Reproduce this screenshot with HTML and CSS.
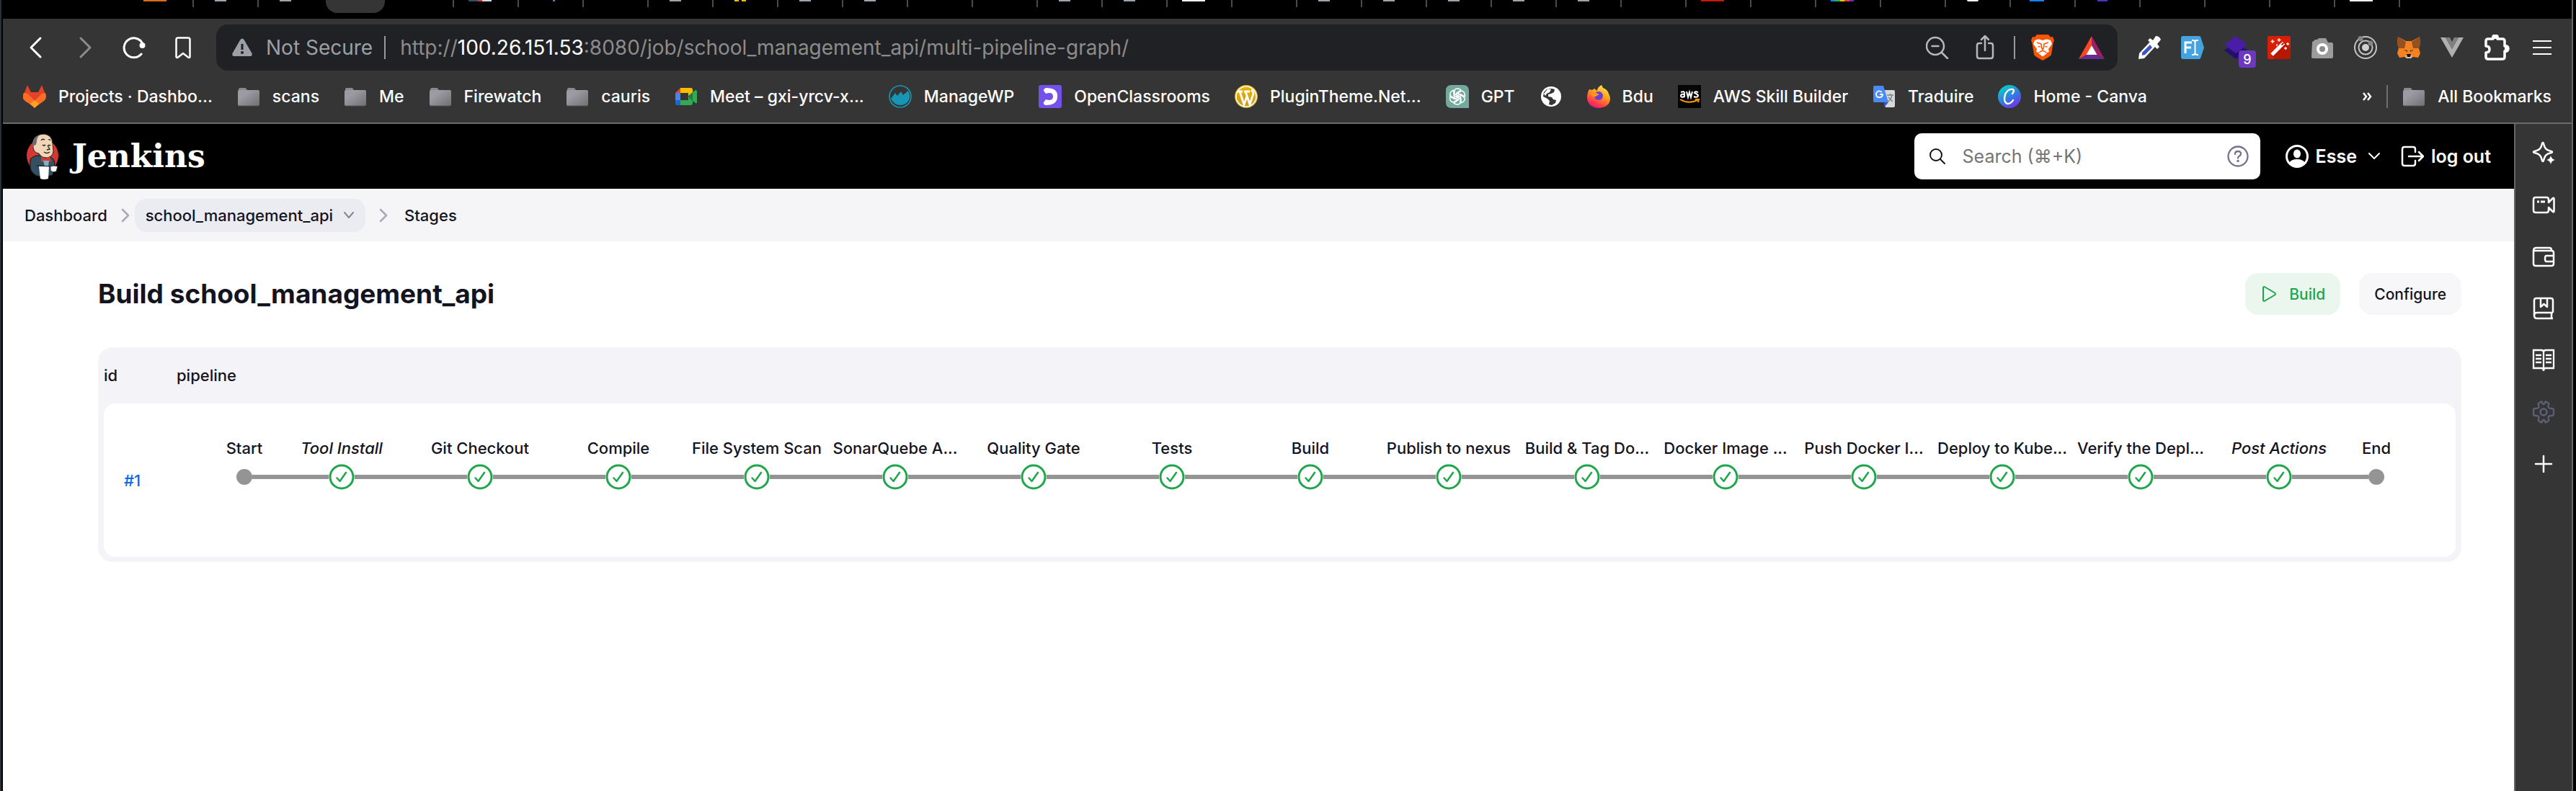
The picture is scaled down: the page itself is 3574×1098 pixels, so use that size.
FILE: index.html
```html
<!DOCTYPE html>
<html lang="en">
<head>
<meta charset="utf-8">
<title>Build school_management_api - Jenkins</title>
<link rel="stylesheet" href="styles.css">
</head>
<body>
<svg width="0" height="0" class="defs" aria-hidden="true">
  <defs>
    <linearGradient id="gFolder" x1="0" y1="0" x2="1" y2="1"><stop offset="0.3" stop-color="#9b9ba3"/><stop offset="1" stop-color="#707072"/></linearGradient>
    <linearGradient id="gCanva" x1="0.2" y1="0" x2="0.8" y2="1"><stop offset="0.1" stop-color="#0cc4cc"/><stop offset="0.55" stop-color="#3478e2"/><stop offset="1" stop-color="#7d2ae8"/></linearGradient>
    <linearGradient id="gFire" x1="0.8" y1="0" x2="0.3" y2="1"><stop offset="0" stop-color="#fff04a"/><stop offset="0.45" stop-color="#ff9a1f"/><stop offset="0.8" stop-color="#ff3a4c"/><stop offset="1" stop-color="#e31587"/></linearGradient>
    <linearGradient id="gGold" x1="0" y1="0" x2="0" y2="1"><stop offset="0" stop-color="#f0b400"/><stop offset="1" stop-color="#c79a1c"/></linearGradient>
    <symbol id="folder" viewBox="0 0 32 32"><path d="M2 9V6q0-2 2-2h7q2 0 2 2l1 1v3z" fill="#8a8a8e"/><rect x="1" y="7" width="30" height="22" rx="2" fill="url(#gFolder)"/><path d="M2 29h28" stroke="#555" stroke-width="1"/></symbol>
    <symbol id="check" viewBox="0 0 36 36"><circle cx="18" cy="18" r="16" fill="#fff" stroke="#1ea64b" stroke-width="3"/><path d="M11.500 19.500l4 4.500 8.500-12" fill="none" stroke="#1ea64b" stroke-width="2.500" stroke-linecap="round" stroke-linejoin="round"/></symbol>
    <symbol id="dot" viewBox="0 0 22 22"><circle cx="11" cy="11" r="11" fill="#949494"/></symbol>
    <symbol id="crumb" viewBox="0 0 14 20"><path d="M3 2l8 8-8 8" fill="none" stroke="#a9a9b9" stroke-width="2.500" stroke-linecap="round" stroke-linejoin="round"/></symbol>
  </defs>
</svg>

<div class="window">
  <div class="tabs" aria-hidden="true">
    <span class="tab"><i class="fav orange"></i></span>
    <span class="tab"><i class="fav grey"></i></span>
    <span class="tab plain"><i class="fav grey"></i></span>
    <span class="tab active"></span>
    <span class="tab"></span>
    <span class="tab"><i class="fav butler"></i></span>
    <span class="tab"><i class="fav blue-dot"></i></span>
    <span class="tab"></span>
    <span class="tab"><i class="fav grey"></i></span>
    <span class="tab"><i class="fav yellow"></i></span>
    <span class="tab"><i class="fav grey"></i></span>
    <span class="tab"><i class="fav grey"></i></span>
    <span class="tab"></span>
    <span class="tab"></span>
    <span class="tab"><i class="fav grey"></i></span>
    <span class="tab"><i class="fav grey"></i></span>
    <span class="tab"><i class="fav white"></i></span>
    <span class="tab"></span>
    <span class="tab"><i class="fav grey"></i></span>
    <span class="tab"><i class="fav grey"></i></span>
    <span class="tab"><i class="fav grey"></i></span>
    <span class="tab"><i class="fav grey"></i></span>
    <span class="tab"><i class="fav grey"></i></span>
    <span class="tab"></span>
    <span class="tab"><i class="fav red"></i></span>
    <span class="tab"></span>
    <span class="tab"><i class="fav stripes"></i></span>
    <span class="tab"></span>
    <span class="tab"><i class="fav round"></i></span>
    <span class="tab"><i class="fav azure"></i></span>
    <span class="tab"><i class="fav indigo"></i></span>
    <span class="tab"></span>
    <span class="tab"></span>
    <span class="tab"></span>
    <span class="tab"><i class="fav white"></i></span>
  </div>

  <div class="toolbar">
    <div class="nav">
      <button type="button" aria-label="Back"><svg width="32" height="32" viewBox="0 0 32 32"><path d="M22 3L9 16l13 13" fill="none" stroke="#fff" stroke-width="3" stroke-linecap="round" stroke-linejoin="round"/></svg></button>
      <button type="button" aria-label="Forward"><svg width="32" height="32" viewBox="0 0 32 32"><path d="M10 3l13 13-13 13" fill="none" stroke="#8c8c8c" stroke-width="3" stroke-linecap="round" stroke-linejoin="round"/></svg></button>
      <button type="button" aria-label="Reload"><svg width="32" height="32" viewBox="0 0 32 32"><path d="M26 25A13.500 13.500 0 1 1 28 11" fill="none" stroke="#fff" stroke-width="3" stroke-linecap="round"/><circle cx="27.500" cy="13" r="4" fill="#fff"/></svg></button>
      <button type="button" aria-label="Bookmark this page"><svg width="32" height="32" viewBox="0 0 32 32"><path d="M6.500 5q0-2.500 2.500-2.500h14q2.500 0 2.500 2.500v24q-1 1.500-2.500.500l-7-5.500-7 5.500q-1.500 1-2.500-.500z" fill="none" stroke="#fff" stroke-width="2.500" stroke-linejoin="round"/></svg></button>
    </div>
    <div class="address">
      <svg width="28" height="26" viewBox="0 0 28 26"><path d="M11.500 2q2.500-3 5 0l11 19q1 4-3 4h-21q-4 0-3-4z" fill="#9aa0a6"/><path d="M14 8v8" stroke="#202124" stroke-width="3"/><circle cx="14" cy="20" r="2" fill="#202124"/></svg>
      <span class="insecure">Not Secure</span>
      <span class="rule light"></span>
      <span class="url">http://<b>100.26.151.53</b>:8080/job/school_management_api/multi-pipeline-graph/</span>
      <div class="address-actions">
        <svg width="32" height="32" viewBox="0 0 32 32"><g fill="none" stroke="#b8b8b8" stroke-width="2.500" stroke-linecap="round"><circle cx="13" cy="14" r="12"/><path d="M22 23l8 8M8.500 14h9"/></g></svg>
        <svg width="32" height="36" viewBox="0 0 32 36"><g fill="none" stroke="#b8b8b8" stroke-width="2.500" stroke-linecap="round" stroke-linejoin="round"><path d="M11 12H8q-3 0-3 3v15q0 3 3 3h16q3 0 3-3V15q0-3-3-3h-3M16 22V3M11 7l5-5 5 5"/></g></svg>
        <span class="rule light"></span>
        <svg width="32" height="36" viewBox="0 0 32 36"><path d="M8 0h16l3 3.500 3-.500 2 5-1.500 4L28 28q-1 2-12 8Q5 30 4 28L1.500 12 0 8l2-5 3 .500z" fill="#fb5402"/><path d="M5 8q5-3 11 0 6-3 11 0l2 5-5 7 1 4-3 1-4-3h-4l-4 3-3-1 1-4-5-7z" fill="#fff"/><path d="M8 11l6 2 .500 5L16 21l1.500-3 .500-5 6-2M9.500 17l3-.500M19.500 16.500l3 .500" fill="none" stroke="#fb5402" stroke-width="1.600"/><path d="M16 23l6 3-6 4.500L10 26z" fill="#fff"/></svg>
        <svg width="36" height="32" viewBox="0 0 36 32"><path d="M18 0L0 32l11-6 7-13z" fill="#ff4724"/><path d="M18 0l18 32-11-6-7-13z" fill="#9e1f63"/><path d="M0 32h36l-11-6H11z" fill="#662d91"/><path d="M18 13l7.500 13h-15z" fill="#fff"/></svg>
      </div>
    </div>
    <div class="extensions">
      <svg width="32" height="32" viewBox="0 0 32 32"><path d="M2 24L17 8l7 7L9 31l-8 1z" fill="#fff"/><path d="M6 27v-4L17 12l3 4-10 10z" fill="#3a55c8"/><path d="M14 6l3-3 4 3 4-6q5 0 7 5l-5 6 3 4-3 3z" fill="#fff"/></svg>
      <svg width="32" height="32" viewBox="0 0 32 32"><path d="M3 0h22q1.500 0 2 1l5 15-5 15q-.500 1-2 1H3q-3 0-3-3V3q0-3 3-3z" fill="#45a3e0"/><path d="M6 24V9h9M6 16h8" fill="none" stroke="#fff" stroke-width="3"/><path d="M15 6h2q2.500 0 2.500 3v14q0 3-2.500 3h-2M24 6h-2q-2.500 0-2.500 3v14q0 3 2.500 3h2" fill="none" stroke="#fff" stroke-width="2"/></svg>
      <span class="badged"><svg width="32" height="32" viewBox="0 0 32 32"><path d="M16 8l16 12-16 12L0 20z" fill="#22106f"/><path d="M16 0l16 12-16 12L0 12z" fill="#4a1da8"/></svg><span class="badge">9</span></span>
      <svg width="32" height="32" viewBox="0 0 32 32"><rect width="32" height="32" rx="2" fill="#d91e06"/><path d="M5 26L23 8l9 10v12q0 2-2 2H10z" fill="#b91600"/><path d="M6 26L20 12" stroke="#fff" stroke-width="5"/><path d="M19.500 12.500l3-3" stroke="#fff" stroke-width="5"/><path d="M19.500 12.500l3-3" stroke="#d91e06" stroke-width="2"/><path d="M7 5v5M4.500 7.500h5M16 3v5M13.500 5.500h5M13 11v3M25 15v4M23 17h4M28 9v4M26 11h4" stroke="#fff" stroke-width="1.300"/></svg>
      <svg width="32" height="32" viewBox="0 0 32 32"><path d="M2 9q0-2 2-2l2-2h3l2-2h10q2 4 3 6h5q2 0 2 2v18q0 2-2 2H3q-2 0-2-2z" fill="#9c9c9c"/><circle cx="16" cy="18" r="8" fill="#fff"/><circle cx="16" cy="18" r="4" fill="#8a8a8a"/></svg>
      <svg width="32" height="32" viewBox="0 0 32 32"><g fill="none" stroke="#c4c4c4" stroke-width="2"><circle cx="16" cy="16" r="15"/><circle cx="16" cy="16" r="9.500"/></g><circle cx="16" cy="16" r="5" fill="#d0d0d0"/><circle cx="9" cy="3.500" r="3.500" fill="#858585"/><circle cx="23" cy="10" r="3.500" fill="#858585"/></svg>
      <svg width="32" height="32" viewBox="0 0 32 32"><path d="M1 1l11 6h8l11-6 1 9-2 7 2 7-3 6-7-1-3 2h-6l-3-2-7 1-3-6 2-7-2-7z" fill="#f58220"/><path d="M1 1l11 7-2 9H2L0 10zM31 1L20 8l2 9h8l2-7z" fill="#96501f"/><path d="M9 19l5 1v2zM23 19l-5 1v2z" fill="#333"/><path d="M11 27h10l-2 4h-6z" fill="#d6c0b3"/><path d="M13 25h6l-1 4h-4z" fill="#111"/></svg>
      <svg width="32" height="32" viewBox="0 0 32 32"><path d="M0 2h7l9 16 9-16h7L16 30z" fill="#b0b0b0"/><path d="M7 2h6l3 6 3-6h6l-9 16z" fill="#808080"/></svg>
      <svg width="36" height="36" viewBox="0 0 36 36"><path d="M3 9q0-3 3-3h7q-1-5 3-5t3 5h7q3 0 3 3v7q5-1 5 3.500T29 23v8q0 3-3 3H6q-3 0-3-3v-6q5 0 5-4.500T3 16z" fill="none" stroke="#fff" stroke-width="3.500" stroke-linejoin="round"/><path d="M13 6q-1-5 3-5t3 5zM29 16q5-1 5 3.500T29 23z" fill="#fff"/></svg>
      <svg class="menu" width="28" height="32" viewBox="0 0 28 32"><path d="M1 7h26M1 16h26M1 25h26" stroke="#fff" stroke-width="2"/></svg>
    </div>
  </div>

  <nav class="bookmarks">
    <a href="#"><svg width="32" height="32" viewBox="0 0 32 32"><path d="M6 0l5 10h10l5-10 5 13-15 18L1 13z" fill="#e24329"/><path d="M6 12l10 10L5 24 0 19v-5l1-3z" fill="#fc6d26"/><path d="M1 11l5 1 10 10 10-10 5-1 1 4q0 5-3 7L16 31.500 3 22q-3-2-3-7z" fill="#fc6d26"/><path d="M10 26l6-5 6 5-6 6z" fill="#fca326"/></svg>Projects · Dashbo...</a>
    <a href="#"><svg width="32" height="32"><use href="#folder"/></svg>scans</a>
    <a href="#"><svg width="32" height="32"><use href="#folder"/></svg>Me</a>
    <a href="#"><svg width="32" height="32"><use href="#folder"/></svg>Firewatch</a>
    <a href="#"><svg width="32" height="32"><use href="#folder"/></svg>cauris</a>
    <a href="#"><svg width="32" height="32" viewBox="0 0 32 32"><path d="M8 4v7H1z" fill="#ea4335"/><path d="M8 4h14q3 0 3 3v8l-6 4v-8H8z" fill="#fbbc04"/><path d="M1 11h7v10H1z" fill="#4285f4"/><path d="M1 21h7v7H3q-2 0-2-2z" fill="#1967d2"/><path d="M8 21h11v-2l6-3v9q0 3-3 3H8z" fill="#34a853"/><path d="M18 16l7-6v12z" fill="#188038"/><path d="M25 10l4-3q2 0 2 2v15q0 2-2 1l-4-3z" fill="#34a853"/></svg>Meet – gxi-yrcv-x...</a>
    <a href="#"><svg width="32" height="32" viewBox="0 0 32 32"><circle cx="16" cy="16" r="15" fill="none" stroke="#1795b5" stroke-width="1.600"/><path d="M3 19l6-8 3 4 5-6 3 5 7-6q4 8 1 13-4 7-12 7T3 19z" fill="#1795b5"/></svg>ManageWP</a>
    <a href="#"><svg width="32" height="32" viewBox="0 0 32 32"><rect width="32" height="32" rx="3" fill="#7451eb"/><path d="M10 4q17 0 16 12 0 12-16 12-4-1-3-4l3-4q10 3 10-4t-10-4L7 8q0-3 3-4z" fill="#fff"/></svg>OpenClassrooms</a>
    <a href="#"><svg width="32" height="32" viewBox="0 0 32 32"><circle cx="16" cy="16" r="16" fill="url(#gGold)"/><circle cx="16" cy="16" r="14" fill="none" stroke="#fff" stroke-width="1.500"/><path d="M4 9h7M13 9h8M7 9l6 18 4-11M15 9l6 18 5-15q0-3-3-5" fill="none" stroke="#fff" stroke-width="2.800"/></svg>PluginTheme.Net...</a>
    <a href="#"><svg width="32" height="32" viewBox="0 0 32 32"><path d="M8 0h16q8 0 8 8v24H8q-8 0-8-8V8q0-8 8-8z" fill="#74aa9c"/><g fill="none" stroke="#fff" stroke-width="1.500"><path id="petal" d="M12 19V9q0-4 4-4 3 0 5 2l-6 4v6"/><use href="#petal" transform="rotate(60 16 16)"/><use href="#petal" transform="rotate(120 16 16)"/><use href="#petal" transform="rotate(180 16 16)"/><use href="#petal" transform="rotate(240 16 16)"/><use href="#petal" transform="rotate(300 16 16)"/></g></svg>GPT</a>
    <a href="#" aria-label="Website"><svg width="32" height="32" viewBox="0 0 32 32"><circle cx="16" cy="16" r="14" fill="#fff"/><path d="M17 5l4 1-1 4-4 2-4 1v3l5 1 2 3 4 1-1 4-5 3-4-1 1-5-3-3-6-3 1-6 4-4z" fill="#353535"/><path d="M6 12l5-6h5l-2 4-4 2-2 3z" fill="#fff"/></svg></a>
    <a href="#"><svg width="32" height="32" viewBox="0 0 32 32"><path d="M3 6l4 1 3-2 4 3q0-5 6-8l2 4q6 2 8 8 2 5 2 6 0 13-16 14Q1 31 0 18q0-7 3-12z" fill="url(#gFire)"/><circle cx="16" cy="15" r="6" fill="#6a3ed0"/><path d="M5 12q5-3 12 1l-5 3q-5 1-7-4z" fill="#ff9a1f"/></svg>Bdu</a>
    <a href="#"><svg width="32" height="32" viewBox="0 0 32 32"><rect width="32" height="32" fill="#050505"/><path d="M4 10q5-2 5 1v6M9 13q-5-1-5 2t5 1M12 9l2 8 2-7 2 7 2-8M28 10q-5-2-5 1 5 2 5 4-1 3-6 1" fill="none" stroke="#fff" stroke-width="2"/><path d="M3 20q12 7 24 1M24 20h5l-1 4" fill="none" stroke="#f90" stroke-width="2"/></svg>AWS Skill Builder</a>
    <a href="#"><svg width="32" height="32" viewBox="0 0 32 32"><path d="M12 7h17q2 0 2 2v20q0 2-2 2H18z" fill="#d8d8d8"/><path d="M16 31l6-7h-6z" fill="#3f51b5"/><path d="M3 1h12l7 23H3q-2 0-2-2V3q0-2 2-2z" fill="#4a8af4"/><path d="M13 10q-6-4-8 2 0 6 5 5 4 0 4-4h-4" fill="none" stroke="#fff" stroke-width="1.800"/><path d="M20 14h9M24.500 12v2M27 14q-1 6-6 9M22 17l6 6" stroke="#6f8791" stroke-width="1.500" fill="none"/></svg>Traduire</a>
    <a href="#"><svg width="32" height="32" viewBox="0 0 32 32"><circle cx="16" cy="16" r="16" fill="url(#gCanva)"/><path d="M20 12q4-5 0-6-6-1-10 7-3 11 3 13 5 0 8-5" fill="none" stroke="#fff" stroke-width="2.400" stroke-linecap="round"/></svg>Home - Canva</a>
    <span class="bookmarks-end">
      <button type="button" aria-label="More bookmarks"><svg width="14" height="12" viewBox="0 0 14 12"><path d="M2 1l4 5-4 5M8 1l4 5-4 5" fill="none" stroke="#fff" stroke-width="2.500"/></svg></button>
      <span class="rule"></span>
      <a href="#"><svg width="32" height="32"><use href="#folder"/></svg>All Bookmarks</a>
    </span>
  </nav>

  <div class="view">
    <div class="page">
      <header class="page-header">
        <a class="logo" href="#">
          <svg width="48" height="64" viewBox="0 0 48 64"><ellipse cx="23" cy="31" rx="22" ry="23" fill="#d33833"/><path d="M6 36q6-6 14-5l14 2q6 3 6 8l-3 17-12 3-10-2q-8-4-9-11z" fill="#335061" stroke="#111" stroke-width="1"/><path d="M10 14Q13 1 25 1q11 1 12 13l1 11q-1 8-9 9-8 0-11-6-7-1-8-8z" fill="#f0d6b7" stroke="#222" stroke-width="1"/><path d="M9 18Q8 5 19 2q-4 4-4 9l-1 5q-5 0-4 6z" fill="#6d6b6d"/><path d="M21 10q2-3 5-1M31 9q2-1 3 1M23 16q2 2 4 0M31 16q2 2 3 0M30 17l3 5-4 1M25 26q4 3 8 0" fill="none" stroke="#222" stroke-width="1.300"/><path d="M21 32l6 3 6-3 2 8-6-2-8 2z" fill="#d33833"/><path d="M24 38h8l-1 8h-5z" fill="#81b0c4"/><path d="M18 46h14l-1 17q-6 2-11 0z" fill="#fff"/><path d="M34 46q5-2 10 0l-2 7q-5 2-8-1z" fill="#fff" stroke="#333" stroke-width="1"/><path d="M15 45l18 1" stroke="#111" stroke-width="1"/></svg>
          <span>Jenkins</span>
        </a>
        <div class="header-right">
          <label class="search">
            <svg width="24" height="24" viewBox="0 0 24 24"><g fill="none" stroke="#14141f" stroke-width="2" stroke-linecap="round"><circle cx="10" cy="10" r="8"/><path d="M16 16l6 6"/></g></svg>
            <input type="search" placeholder="Search (⌘+K)" aria-label="Search">
            <svg width="30" height="30" viewBox="0 0 30 30"><g fill="none" stroke="#73738c" stroke-width="2.300" stroke-linecap="round"><circle cx="15" cy="15" r="13.500"/><path d="M11 12q0-4 4-4t4 3.500q0 2-2 3t-2 3"/></g><circle cx="15" cy="21.500" r="1.700" fill="#73738c"/></svg>
          </label>
          <div class="account">
            <a href="#"><svg width="32" height="32" viewBox="0 0 32 32"><circle cx="16" cy="16" r="14.500" fill="none" stroke="#fff" stroke-width="3"/><ellipse cx="16" cy="12.500" rx="5" ry="6" fill="#fff"/><path d="M5 25q3-5 11-5t11 5q-4 6-11 6T5 25z" fill="#fff"/></svg>Esse</a>
            <button type="button" aria-label="User menu"><svg width="18" height="12" viewBox="0 0 18 12"><path d="M2 2l7 7 7-7" fill="none" stroke="#fff" stroke-width="2" stroke-linecap="round" stroke-linejoin="round"/></svg></button>
          </div>
          <a class="logout" href="#"><svg width="32" height="32" viewBox="0 0 32 32"><g fill="none" stroke="#fff" stroke-width="2.500" stroke-linecap="round" stroke-linejoin="round"><path d="M20 10V6q0-3-3-3H5Q2 3 2 6v20q0 3 3 3h12q3 0 3-3v-4M11 16h19M25 10l6 6-6 6"/></g></svg>log out</a>
        </div>
      </header>

      <nav class="breadcrumbs">
        <a href="#">Dashboard</a>
        <svg width="14" height="20"><use href="#crumb"/></svg>
        <a class="pill" href="#">school_management_api<svg width="16" height="12" viewBox="0 0 16 12"><path d="M2 2l6 7 6-7" fill="none" stroke="#85858f" stroke-width="2" stroke-linecap="round" stroke-linejoin="round"/></svg></a>
        <svg width="14" height="20"><use href="#crumb"/></svg>
        <a href="#">Stages</a>
      </nav>

      <main>
        <div class="title-row">
          <h1>Build school_management_api</h1>
          <div class="actions">
            <button type="button" class="btn build"><svg width="24" height="24" viewBox="0 0 24 24"><path d="M4 4q0-3 2.500-1.500L20 10.500q2 1.500 0 3L6.500 21.500Q4 23 4 20z" fill="none" stroke="#1ea64b" stroke-width="2"/></svg>Build</button>
            <button type="button" class="btn">Configure</button>
          </div>
        </div>

        <table class="runs">
          <thead><tr><th class="id">id</th><th>pipeline</th></tr></thead>
          <tbody>
            <tr>
              <td class="id"><a href="#">#1</a></td>
              <td>
                <ol class="graph">
                  <li class="end first"><span class="label">Start</span><span class="node"><svg width="22" height="22"><use href="#dot"/></svg></span></li>
                  <li><span class="label"><em>Tool Install</em></span><span class="node"><svg width="36" height="36"><use href="#check"/></svg></span></li>
                  <li><span class="label">Git Checkout</span><span class="node"><svg width="36" height="36"><use href="#check"/></svg></span></li>
                  <li><span class="label">Compile</span><span class="node"><svg width="36" height="36"><use href="#check"/></svg></span></li>
                  <li><span class="label">File System Scan</span><span class="node"><svg width="36" height="36"><use href="#check"/></svg></span></li>
                  <li><span class="label">SonarQuebe A...</span><span class="node"><svg width="36" height="36"><use href="#check"/></svg></span></li>
                  <li><span class="label">Quality Gate</span><span class="node"><svg width="36" height="36"><use href="#check"/></svg></span></li>
                  <li><span class="label">Tests</span><span class="node"><svg width="36" height="36"><use href="#check"/></svg></span></li>
                  <li><span class="label">Build</span><span class="node"><svg width="36" height="36"><use href="#check"/></svg></span></li>
                  <li><span class="label">Publish to nexus</span><span class="node"><svg width="36" height="36"><use href="#check"/></svg></span></li>
                  <li><span class="label">Build &amp; Tag Do...</span><span class="node"><svg width="36" height="36"><use href="#check"/></svg></span></li>
                  <li><span class="label">Docker Image ...</span><span class="node"><svg width="36" height="36"><use href="#check"/></svg></span></li>
                  <li><span class="label">Push Docker I...</span><span class="node"><svg width="36" height="36"><use href="#check"/></svg></span></li>
                  <li><span class="label">Deploy to Kube...</span><span class="node"><svg width="36" height="36"><use href="#check"/></svg></span></li>
                  <li><span class="label">Verify the Depl...</span><span class="node"><svg width="36" height="36"><use href="#check"/></svg></span></li>
                  <li><span class="label"><em>Post Actions</em></span><span class="node"><svg width="36" height="36"><use href="#check"/></svg></span></li>
                  <li class="end last"><span class="label">End</span><span class="node"><svg width="22" height="22"><use href="#dot"/></svg></span></li>
                </ol>
              </td>
            </tr>
          </tbody>
        </table>
      </main>
    </div>

    <aside class="sidebar">
      <button type="button" aria-label="Assistant"><svg width="32" height="32" viewBox="0 0 32 32"><path d="M15 2q1 0 1.500 3 1.500 7 8.500 8.500 3 .5 3 1.500t-3 1.500q-7 1.500-8.500 8.500-.5 3-1.500 3t-1.500-3q-1.500-7-8.500-8.500-3-.5-3-1.500t3-1.500q7-1.500 8.500-8.500.5-3 1.500-3z" fill="none" stroke="#fff" stroke-width="2.500"/><circle cx="26" cy="26" r="7" fill="#353535"/><path d="M26 20q1 5 6 6-5 1-6 6-1-5-6-6 5-1 6-6z" fill="#fff"/></svg></button>
      <button type="button" aria-label="Talk"><svg width="32" height="32" viewBox="0 0 32 32"><path d="M5 6h15q3 0 3 3v4l6-6q1.500-1 1.500 1v17q0 2-1.500 1l-6-6v4q0 3-3 3H5q-3 0-3-3V9q0-3 3-3z" fill="none" stroke="#fff" stroke-width="2.500" stroke-linejoin="round"/><path d="M7 12h3M12 12h6" stroke="#fff" stroke-width="3"/></svg></button>
      <button type="button" aria-label="Wallet"><svg width="32" height="32" viewBox="0 0 32 32"><path d="M2 8q0-4 4-4h18q3 0 3 3v1M2 8h25q3 0 3 3v15q0 3-3 3H5q-3 0-3-3zM30 15H20q-2 0-2 4t2 4h10" fill="none" stroke="#fff" stroke-width="2.500" stroke-linejoin="round"/></svg></button>
      <button type="button" aria-label="Bookmarks"><svg width="32" height="32" viewBox="0 0 32 32"><path d="M29 22V5q0-3-3-3H6Q3 2 3 5v21q0 4 4 4h22M29 22H7q-4 0-4 4M27 22v8M12 2v12l4.500-4 4.500 4V2" fill="none" stroke="#fff" stroke-width="2.500" stroke-linejoin="round"/></svg></button>
      <button type="button" aria-label="Reading list"><svg width="32" height="32" viewBox="0 0 32 32"><path d="M2 2h11q3 0 3 3 0-3 3-3h11v25H19q-3 0-3 4 0-4-3-4H2zM16 5v24" fill="none" stroke="#fff" stroke-width="2.300"/><path d="M5 9h8M5 14h8M5 19h8M19 9h8M19 14h8M19 19h8" stroke="#fff" stroke-width="2.500"/></svg></button>
      <button type="button" aria-label="Settings"><svg width="32" height="32" viewBox="0 0 32 32"><path d="M12 2q1-1 2 0 0 3 2 3t2-3q1-1 2 0l3 2q1 1 0 2-1 3 0 4t4 1q3 0 3 2v6q0 2-3 2-3 0-4 1t0 4q1 1 0 2l-3 2q-1 1-2 0 0-3-2-3t-2 3q-1 1-2 0l-3-2q-1-1 0-2 1-3 0-4t-4-1q-3 0-3-2v-6q0-2 3-2 3 0 4-1t0-4q-1-1 0-2z" fill="none" stroke="#5c5f76" stroke-width="2.300" stroke-linejoin="round"/><circle cx="16" cy="16" r="4.500" fill="none" stroke="#5c5f76" stroke-width="2.500"/></svg></button>
      <button type="button" aria-label="Add panel"><svg width="32" height="32" viewBox="0 0 32 32"><path d="M16 5v22M5 16h22" stroke="#fff" stroke-width="2.500" stroke-linecap="round"/></svg></button>
    </aside>
  </div>
</div>
</body>
</html>
```
FILE: styles.css
```css
* { box-sizing: border-box; }

body {
  margin: 0;
  padding: 0 4px;
  min-height: 100vh;
  display: flex;
  background: linear-gradient(90deg, #26323a 2px, #000 2px);
  font-family: Inter, "Liberation Sans", sans-serif;
  color: #14141f;
}

.defs { position: absolute; }
svg { display: block; flex: none; }
a { color: inherit; text-decoration: none; }
button { font: inherit; color: inherit; background: none; border: 0; padding: 0; }

.window {
  flex: 1;
  min-width: 0;
  display: flex;
  flex-direction: column;
  background: #353535;
  border-right: 2px solid #666;
}

.rule { width: 2px; height: 32px; background: #6f6f6f; }
.rule.light { background: #9a9a9a; }

/* Tab strip */
.tabs {
  height: 26px;
  display: flex;
  align-items: flex-start;
  padding-left: 175px;
  background: #000;
  overflow: hidden;
}
.tab { flex: 0 0 90px; height: 10px; border-right: 2px solid #4a4a4a; }
.tab.plain { flex-basis: 93px; border-color: transparent; }
.tab.active { flex-basis: 82px; height: 18px; border: 0; border-radius: 0 0 16px 16px; background: #353535; margin-right: 6px; }
.fav { display: block; width: 32px; height: 2px; margin-left: 20px; }
.fav.orange { background: #dd6b1a; }
.fav.white { background: #fff; }
.fav.red { background: #c41a08; }
.fav.grey { width: 16px; margin-left: 29px; background: #9aa5ad; }
.fav.yellow { width: 16px; margin-left: 29px; background: linear-gradient(90deg, #fb0 40%, #000 40%, #000 60%, #fb0 60%); }
.fav.butler { background: linear-gradient(90deg, #335061 40%, #d33833 40%, #d33833 60%, #cfd8dc 60%); }
.fav.blue-dot { width: 3px; margin-left: 47px; background: #2a8fd8; }
.fav.stripes { background: linear-gradient(90deg, #0a84ff 20%, #30b050 20%, #30b050 40%, #fb0 40%, #fb0 60%, #e8402a 60%, #e8402a 80%, #7a2ab0 80%); }
.fav.round { width: 16px; margin-left: 29px; background: #fff; border-radius: 0 0 8px 8px; }
.fav.azure { width: 20px; margin-left: 26px; background: #0a84ff; }
.fav.indigo { width: 14px; margin-left: 30px; background: #4a34c0; }

/* Toolbar */
.toolbar {
  display: flex;
  align-items: center;
  padding: 8px 27px 8px 30px;
}
.nav { display: flex; gap: 36px; width: 266px; }
.address {
  flex: 1;
  height: 64px;
  display: flex;
  align-items: center;
  padding: 0 18px 0 22px;
  border-radius: 16px;
  background: #202124;
  color: #8c8c8c;
  font-size: 28px;
}
.insecure { margin: 0 16px 0 19px; color: #9aa0a6; }
.url { margin-left: 20px; }
.url b { font-weight: 400; color: #fff; }
.address-actions { margin-left: auto; display: flex; align-items: center; gap: 34px; }
.address-actions .rule { margin: 0 -12px 0 -10px; }
.extensions { display: flex; align-items: center; gap: 28px; margin-left: 28px; }
.extensions .menu { margin-left: 3px; }
.badged { position: relative; }
.badge {
  position: absolute;
  left: 20px;
  top: 20px;
  width: 24px;
  height: 24px;
  border-radius: 4px;
  background: #6c38c0;
  color: #fff;
  font-size: 18px;
  font-weight: 500;
  line-height: 26px;
  text-align: center;
}

/* Bookmarks */
.bookmarks {
  height: 66px;
  display: flex;
  align-items: center;
  gap: 34px;
  padding: 0 28px 8px;
  border-bottom: 2px solid #6b6b6b;
  color: #fff;
  font-size: 23px;
  font-weight: 500;
  white-space: nowrap;
}
.bookmarks a { display: flex; align-items: center; gap: 17px; }
.bookmarks-end { margin-left: auto; display: flex; align-items: center; gap: 20px; }

/* Web page and side panel */
.view { flex: 1; display: flex; }
.page { flex: 1; min-width: 0; background: #fff; }
.sidebar {
  width: 80px;
  border-left: 2px solid #666;
  display: flex;
  flex-direction: column;
  align-items: center;
  gap: 40px;
  padding-top: 24px;
}

.page-header {
  height: 90px;
  display: flex;
  align-items: center;
  justify-content: space-between;
  padding: 0 32px;
  background: #000;
  color: #fff;
}
.logo { display: flex; align-items: center; gap: 16px; font: bold 44px/64px "DejaVu Serif", serif; }
.header-right { display: flex; align-items: center; font-size: 25px; font-weight: 600; }
.search {
  width: 480px;
  height: 64px;
  display: flex;
  align-items: center;
  padding: 0 16px 0 20px;
  border-radius: 10px;
  background: #fff;
}
.search input {
  flex: 1;
  min-width: 0;
  margin-left: 23px;
  padding: 0;
  border: 0;
  outline: 0;
  background: none;
  color: #14141f;
  font: 25px Inter, "DejaVu Sans", sans-serif;
}
.search input::placeholder { color: #757575; opacity: 1; }
.account { display: flex; align-items: center; gap: 15px; margin: 0 28px 0 35px; }
.account a, .logout { display: flex; align-items: center; gap: 10px; }

.breadcrumbs {
  height: 73px;
  display: flex;
  align-items: center;
  padding-left: 30px;
  background: #f5f5f8;
  font-size: 22px;
  font-weight: 500;
}
.breadcrumbs > svg { margin: 0 6px 0 18px; }
.breadcrumbs > svg:last-of-type { margin-right: 22px; }
.pill {
  height: 46px;
  display: flex;
  align-items: center;
  gap: 14px;
  padding: 0 15px;
  border-radius: 16px;
  background: #ebecf2;
}

main { padding: 44px 73px 60px 132px; }
.title-row { display: flex; align-items: center; justify-content: space-between; margin-bottom: 45px; }
h1 { margin: 0; font-size: 37px; line-height: 48px; font-weight: 700; }
.actions { display: flex; gap: 26px; }
.btn {
  height: 58px;
  display: flex;
  align-items: center;
  gap: 16px;
  padding: 0 21px;
  border-radius: 18px;
  background: #f7f7fa;
  font-size: 21px;
  font-weight: 500;
}
.btn.build { background: #ebf6ee; color: #1ea64b; }

/* Pipeline runs */
.runs {
  width: 100%;
  border-spacing: 0;
  border-collapse: separate;
  padding: 0 8px 7px;
  border-radius: 20px;
  background: #f3f3f8;
  font-size: 22px;
}
.runs th { height: 78px; padding: 0; text-align: left; font-weight: 500; }
.runs .id { width: 101px; }
.runs td { height: 213px; padding: 0 0 0 55px; background: #fff; border-radius: 0 16px 16px 0; }
.runs td.id { padding: 0 0 0 28px; border-radius: 16px 0 0 16px; color: #0b6bea; font-weight: 500; }

.graph { display: flex; margin: 0; padding: 0; list-style: none; }
.graph li { flex: 0 0 192px; display: flex; flex-direction: column; }
.graph li.end { flex-basis: 78px; }
.label { line-height: 44px; text-align: center; white-space: nowrap; font-weight: 500; }
.node { height: 36px; margin-bottom: 54px; display: flex; align-items: center; }
.node::before, .node::after { content: ""; flex: 1; height: 6px; background: #949494; }
.first .node::before, .last .node::after { background: none; }
```
